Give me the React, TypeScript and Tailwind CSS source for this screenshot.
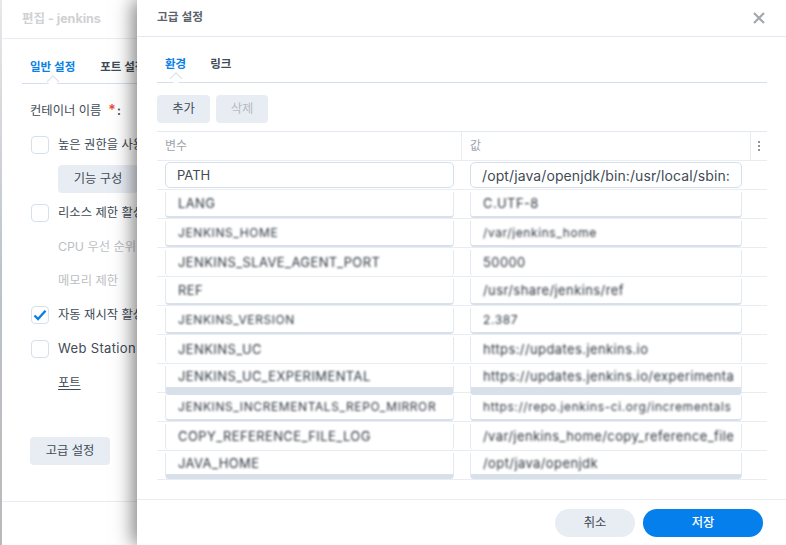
import { clsx } from 'clsx';

interface EnvRow {
  name: string;
  value: string;
  small?: boolean;
  band?: string;
}

const rows: EnvRow[] = [
  { name: 'LANG', value: 'C.UTF-8', band: 'h-[26px] border-b-[2px] border-b-[#d8e1ea]' },
  { name: 'JENKINS_HOME', value: '/var/jenkins_home', small: true, band: 'h-[26px] border-b-[2px] border-b-[#d8e1ea]' },
  { name: 'JENKINS_SLAVE_AGENT_PORT', value: '50000' },
  { name: 'REF', value: '/usr/share/jenkins/ref', band: 'h-[26px] border-b-[2px] border-b-[#d8e1ea]' },
  { name: 'JENKINS_VERSION', value: '2.387', small: true, band: 'h-[26px] border-b-[2px] border-b-[#d8e1ea]' },
  { name: 'JENKINS_UC', value: 'https://updates.jenkins.io' },
  { name: 'JENKINS_UC_EXPERIMENTAL', value: 'https://updates.jenkins.io/experimenta', band: 'h-[29px] border-b-[8px] border-b-[#d8e1ea]' },
  { name: 'JENKINS_INCREMENTALS_REPO_MIRROR', value: 'https://repo.jenkins-ci.org/incrementals', small: true, band: 'h-[26px] border-b-[2px] border-b-[#d8e1ea]' },
  { name: 'COPY_REFERENCE_FILE_LOG', value: '/var/jenkins_home/copy_reference_file' },
  { name: 'JAVA_HOME', value: '/opt/java/openjdk', band: 'h-[26px] border-b-[5px] border-b-[#d8e1ea]' },
];

function Tab({ label, active }: { label: string; active?: boolean }) {
  return (
    <span className={clsx('relative text-[11.5px] font-semibold', active ? 'text-[#0a7fe8]' : 'text-[#414b55]')}>
      {label}
      {active && (
        <span className="absolute left-1/2 top-[19px] h-[9px] w-[9px] -translate-x-1/2 rotate-45 border-l border-t border-[#d3dfea] bg-white" />
      )}
    </span>
  );
}

function Check({ checked }: { checked?: boolean }) {
  return (
    <span className="flex h-[18px] w-[18px] shrink-0 items-center justify-center rounded-[4px] border border-[#d6e0ea] bg-white">
      {checked && (
        <svg width="14" height="12" viewBox="0 0 14 12" fill="none">
          <path d="M1.5 6.5 L5 10 L12.5 1.8" stroke="#0a7fe8" strokeWidth="2.4" />
        </svg>
      )}
    </span>
  );
}

function OptionRow({ label, checked, latin }: { label: string; checked?: boolean; latin?: boolean }) {
  return (
    <div className="flex h-[34px] items-center gap-[9px] whitespace-nowrap pl-[1px]">
      <Check checked={checked} />
      <span className={clsx(latin && 'text-[13px] tracking-[0.35px]')}>{label}</span>
    </div>
  );
}

function Field({ text, small, band, className }: { text: string; small?: boolean; band?: string; className: string }) {
  return (
    <div
      className={clsx(
        'mt-[2px] box-border flex items-center overflow-hidden rounded-b-[4px] border-x border-x-[#e3e9f0] pl-[12px]',
        band ?? 'h-[26px]',
        className
      )}
    >
      <span
        className={clsx(
          'whitespace-nowrap text-[#2f3740] blur-[1px]',
          small ? 'text-[12px] tracking-[0.6px]' : 'text-[13px] tracking-[0.4px]'
        )}
      >
        {text}
      </span>
    </div>
  );
}

export default function App() {
  return (
    <div className="relative flex h-[545px] w-[786px] overflow-hidden bg-white font-[family-name:Inter,'Noto_Sans_CJK_KR',sans-serif] text-[12.3px] text-[#414b55]">
      <div className="w-[2px] shrink-0 bg-linear-to-b from-[#e8e8e8] via-[#bdc3cc] to-[#b9b9b9]" />

      {/* background window */}
      <div className="flex flex-1 flex-col">
        <div className="flex h-[39px] items-center border-b border-[#e9edf3] pl-[20px] text-[12.5px] font-bold text-[#cfd1d3]">
          편집 - jenkins
        </div>
        <div className="ml-[20px] mt-[17px] flex h-[28px] gap-[25px] border-b border-[#d3dfea] pl-[8px] pt-[2px] leading-[18px]">
          <Tab label="일반 설정" active />
          <Tab label="포트 설정" />
        </div>
        <div className="ml-[28px] mt-[17px] flex-1">
          <div className="mb-[8px] leading-[18px]">
            컨테이너 이름
            <span className="ml-[7px] text-[14px] font-semibold text-[#f04438]">*</span>
            <span className="ml-[1px] font-semibold">:</span>
          </div>
          <OptionRow label="높은 권한을 사용" />
          <button className="mb-[3px] ml-[28px] mt-[3px] h-[28px] w-[80px] rounded-[4px] bg-[#e8edf4]">기능 구성</button>
          <OptionRow label="리소스 제한 활성" />
          <div className="flex h-[34px] items-center pl-[28px] text-[#bcc0c4]">CPU 우선 순위</div>
          <div className="flex h-[34px] items-center pl-[28px] text-[#bcc0c4]">메모리 제한</div>
          <OptionRow label="자동 재시작 활성" checked />
          <OptionRow label="Web Station" latin />
          <div className="flex h-[34px] items-center pl-[28px]">
            <span className="underline underline-offset-2">포트</span>
          </div>
          <button className="mt-[37px] h-[28px] w-[80px] rounded-[4px] bg-[#e8edf4]">고급 설정</button>
        </div>
        <div className="h-[44px] border-t border-[#e9edf3]" />
      </div>

      {/* advanced settings modal */}
      <div className="absolute bottom-0 left-[137px] right-0 top-0 flex flex-col bg-white shadow-[-4px_0_18px_rgba(0,0,0,0.5)]">
        <div className="flex h-[37px] items-center justify-between border-b border-[#e3e9f0] pl-[20px] pr-[21px] text-[11.7px] font-semibold text-[#5a636c]">
          고급 설정
          <svg width="12" height="12" viewBox="0 0 12 12" fill="none">
            <path d="M1 1 L11 11 M11 1 L1 11" stroke="#a3a8ad" strokeWidth="2.2" />
          </svg>
        </div>

        <div className="flex flex-1 flex-col px-[20px] pr-[19px]">
          <div className="mt-[17px] flex h-[29px] gap-[24px] border-b border-[#d3dfea] pl-[8px] pt-[1px] leading-[18px]">
            <Tab label="환경" active />
            <Tab label="링크" />
          </div>

          <div className="mt-[12px] flex gap-[6px]">
            <button className="h-[28px] w-[53px] rounded-[4px] bg-[#e8edf4]">추가</button>
            <button className="h-[28px] w-[52px] rounded-[4px] bg-[#e8edf4] text-[#b5babf]">삭제</button>
          </div>

          <div className="mt-[8px] border-t border-[#e3e9f0]">
            <div className="flex h-[29px] border-b border-[#e9edf3] text-[12px] text-[#9ea4aa]">
              <div className="flex w-[305px] items-center border-r border-[#e9edf3] pl-[8px]">변수</div>
              <div className="flex w-[289px] items-center border-r border-[#e9edf3] pl-[8px]">값</div>
              <div className="flex flex-1 flex-col items-center justify-center gap-[2px]">
                <span className="h-[2px] w-[2px] bg-[#8f959b]" />
                <span className="h-[2px] w-[2px] bg-[#8f959b]" />
                <span className="h-[2px] w-[2px] bg-[#8f959b]" />
              </div>
            </div>

            <div className="flex h-[29px] border-b border-[#e9edf3]">
              <div className="w-[304px] pl-[8px]">
                <div className="mt-[1px] flex h-[26px] w-[289px] items-center rounded-[5px] border border-[#d3dfea] pl-[11px] pt-[1px] text-[13px]">
                  PATH
                </div>
              </div>
              <div className="pl-[9px]">
                <div className="mt-[1px] flex h-[26px] w-[272px] items-center overflow-hidden whitespace-nowrap rounded-[5px] border border-[#d3dfea] pl-[11px] text-[14px] tracking-[0.1px]">
                  /opt/java/openjdk/bin:/usr/local/sbin:
                </div>
              </div>
            </div>

            {rows.map((row) => (
              <div key={row.name} className="flex h-[29px] border-b border-[#e9edf3]">
                <div className="w-[304px] pl-[8px]">
                  <Field text={row.name} small={row.small} band={row.band} className="w-[289px]" />
                </div>
                <div className="pl-[9px]">
                  <Field text={row.value} small={row.small} band={row.band} className="w-[272px]" />
                </div>
              </div>
            ))}
          </div>
        </div>

        <div className="flex h-[46px] items-start justify-end gap-[8px] border-t border-[#e9edf3] pr-[23px] pt-[9px]">
          <button className="h-[28px] w-[80px] rounded-full bg-[#e8edf4]">취소</button>
          <button className="h-[28px] w-[120px] rounded-full bg-[#057feb] font-medium text-white">저장</button>
        </div>
      </div>
    </div>
  );
}
